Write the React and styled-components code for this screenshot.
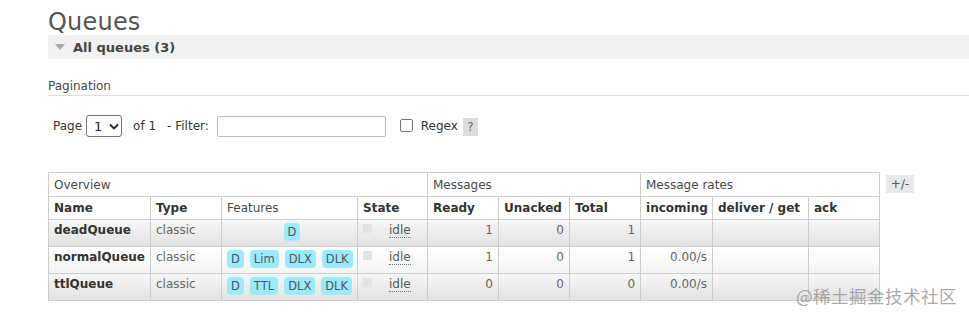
import styled, { createGlobalStyle } from "styled-components";

const queues = [
  { name: "deadQueue", type: "classic", features: ["D"], center: true, ready: 1, unacked: 0, total: 1, incoming: "" },
  { name: "normalQueue", type: "classic", features: ["D", "Lim", "DLX", "DLK"], ready: 1, unacked: 0, total: 1, incoming: "0.00/s" },
  { name: "ttlQueue", type: "classic", features: ["D", "TTL", "DLX", "DLK"], ready: 0, unacked: 0, total: 0, incoming: "0.00/s" },
];

const colWidths = [102, 71, 136, 70, 71, 71, 71, 72, 96, 71];

const GlobalStyle = createGlobalStyle`
  html, body {
    margin: 0;
    padding: 0;
    background: #fff;
    font-family: "DejaVu Sans", Verdana, sans-serif;
    color: #484848;
    overflow: hidden;
  }
`;

const App = () => {
  return (
    <Page>
      <GlobalStyle />
      <Title>Queues</Title>
      <SectionBar>
        <Arrow />
        <span>All queues (3)</span>
      </SectionBar>

      <SubHeading>Pagination</SubHeading>

      <FilterRow>
        <span>Page</span>
        <PageSelect>
          <span>1</span>
          <svg width="10" height="7" viewBox="0 0 10 7">
            <path d="M1 1.5 L5 5.5 L9 1.5" fill="none" stroke="#222" strokeWidth="1.8" />
          </svg>
        </PageSelect>
        <OfText>of 1</OfText>
        <span>- Filter:</span>
        <FilterInput />
        <CheckBox />
        <span>Regex</span>
        <HelpTag>?</HelpTag>
      </FilterRow>

      <TableRow>
        <QueueTable>
          <colgroup>
            {colWidths.map((w, i) => (
              <col key={i} style={{ width: w }} />
            ))}
          </colgroup>
          <thead>
            <GroupRow>
              <th colSpan={4}>Overview</th>
              <th colSpan={3}>Messages</th>
              <th colSpan={3}>Message rates</th>
            </GroupRow>
            <HeadRow>
              <th>Name</th>
              <th>Type</th>
              <th className="normal">Features</th>
              <th>State</th>
              <th>Ready</th>
              <th>Unacked</th>
              <th>Total</th>
              <th>incoming</th>
              <th>deliver / get</th>
              <th>ack</th>
            </HeadRow>
          </thead>
          <tbody>
            {queues.map((q, i) => (
              <DataRow key={q.name} alt={i % 2 === 0}>
                <NameCell>{q.name}</NameCell>
                <td>{q.type}</td>
                <FeatureCell center={q.center}>
                  {q.features.map((f) => (
                    <Badge key={f}>{f}</Badge>
                  ))}
                </FeatureCell>
                <StateCell>
                  <StateDot />
                  <Idle>idle</Idle>
                </StateCell>
                <NumCell>{q.ready}</NumCell>
                <NumCell>{q.unacked}</NumCell>
                <NumCell>{q.total}</NumCell>
                <NumCell>{q.incoming}</NumCell>
                <td />
                <td />
              </DataRow>
            ))}
          </tbody>
        </QueueTable>
        <ToggleButton>+/-</ToggleButton>
      </TableRow>

      <Watermark>@稀土掘金技术社区</Watermark>
    </Page>
  );
};

export default App;

const Page = styled.div`
  position: relative;
  width: 969px;
  height: 316px;
  padding-left: 48px;
  box-sizing: border-box;
  font-size: 12px;
`;

const Title = styled.h1`
  margin: 0;
  padding-top: 8px;
  height: 27px;
  font-size: 24px;
  font-weight: normal;
  line-height: 28px;
  color: #555;
  letter-spacing: 0.2px;
`;

const SectionBar = styled.div`
  display: flex;
  align-items: center;
  gap: 8px;
  height: 24px;
  padding-left: 7px;
  background: #f2f2f2;
  font-size: 13px;
  font-weight: bold;
  color: #444;
`;

const Arrow = styled.span`
  width: 0;
  height: 0;
  border-left: 5px solid transparent;
  border-right: 5px solid transparent;
  border-top: 6px solid #aaa;
`;

const SubHeading = styled.div`
  margin-top: 20px;
  padding-bottom: 2px;
  border-bottom: 1px solid #ddd;
  font-size: 12px;
  line-height: 14px;
  color: #484848;
`;

const FilterRow = styled.div`
  display: flex;
  align-items: center;
  height: 22px;
  margin-top: 19px;
  padding-left: 5px;
  font-size: 12px;
  color: #333;
`;

const PageSelect = styled.div`
  display: flex;
  align-items: center;
  gap: 7px;
  box-sizing: border-box;
  width: 36px;
  height: 22px;
  margin-left: 4px;
  padding-left: 7px;
  border: 1px solid #767676;
  border-radius: 3px;
  font-size: 13px;
  color: #222;
`;

const OfText = styled.span`
  margin: 0 11px 0 11px;
`;

const FilterInput = styled.div`
  box-sizing: border-box;
  width: 169px;
  height: 21px;
  margin-left: 8px;
  border: 1px solid #bbb;
  border-radius: 2px;
`;

const CheckBox = styled.div`
  box-sizing: border-box;
  width: 13px;
  height: 13px;
  margin: 0 8px 2px 14px;
  border: 1px solid #767676;
  border-radius: 2px;
`;

const HelpTag = styled.span`
  display: inline-flex;
  align-items: center;
  justify-content: center;
  width: 15px;
  height: 18px;
  margin-left: 5px;
  margin-top: 2px;
  background: #ddd;
  color: #666;
  font-size: 12px;
`;

const TableRow = styled.div`
  display: flex;
  align-items: flex-start;
  gap: 6px;
  margin-top: 35px;
`;

const QueueTable = styled.table`
  border-collapse: collapse;
  table-layout: fixed;
  width: 831px;
  font-size: 12px;

  th,
  td {
    border: 1px solid #ccc;
    padding: 0 5px;
    text-align: left;
    white-space: nowrap;
    overflow: hidden;
  }
`;

const GroupRow = styled.tr`
  height: 24px;

  th {
    font-weight: normal;
    color: #484848;
    background: #fff;
    padding-top: 1px;
  }
`;

const HeadRow = styled.tr`
  height: 23px;

  th {
    font-weight: bold;
    color: #333;
    background: #fff;
  }

  th.normal {
    font-weight: normal;
    color: #484848;
  }
`;

const DataRow = styled.tr`
  height: 27px;
  background: ${({ alt }) =>
    alt
      ? "linear-gradient(to bottom, #f6f6f6, #e2e2e2)"
      : "linear-gradient(to bottom, #ffffff, #f4f4f4)"};

  td {
    vertical-align: top;
    padding-top: 3px;
    color: #666;
  }
`;

const NameCell = styled.td`
  && {
    font-weight: bold;
    color: #333;
    font-size: 12px;
  }
`;

const FeatureCell = styled.td`
  && {
    text-align: ${({ center }) => (center ? "center" : "left")};
    padding: 3px 0 0 5px;
  }
`;

const Badge = styled.span`
  display: inline-block;
  margin-right: 6px;
  padding: 1px 4px;
  border-radius: 4px;
  background: #99ebff;
  color: #555;
  font-size: 11.5px;
  line-height: 16px;

  &:last-child {
    margin-right: 0;
  }
`;

const StateCell = styled.td`
  && {
    padding-left: 5px;
  }
`;

const StateDot = styled.span`
  display: inline-block;
  width: 9px;
  height: 9px;
  margin-right: 17px;
  background: #e3e3e3;
  vertical-align: 1px;
`;

const Idle = styled.abbr`
  text-decoration: none;
  border-bottom: 1px dotted #777;
  color: #555;
`;

const NumCell = styled.td`
  && {
    text-align: right;
  }
`;

const ToggleButton = styled.div`
  display: flex;
  align-items: center;
  justify-content: center;
  width: 28px;
  height: 18px;
  margin-top: 3px;
  background: #e8e8e8;
  color: #555;
  font-size: 12px;
`;

const Watermark = styled.div`
  position: absolute;
  left: 796px;
  top: 283px;
  font-family: "Noto Sans CJK SC", sans-serif;
  font-size: 17.5px;
  color: rgba(140, 140, 140, 0.75);
  letter-spacing: 0.5px;
  white-space: nowrap;
`;
